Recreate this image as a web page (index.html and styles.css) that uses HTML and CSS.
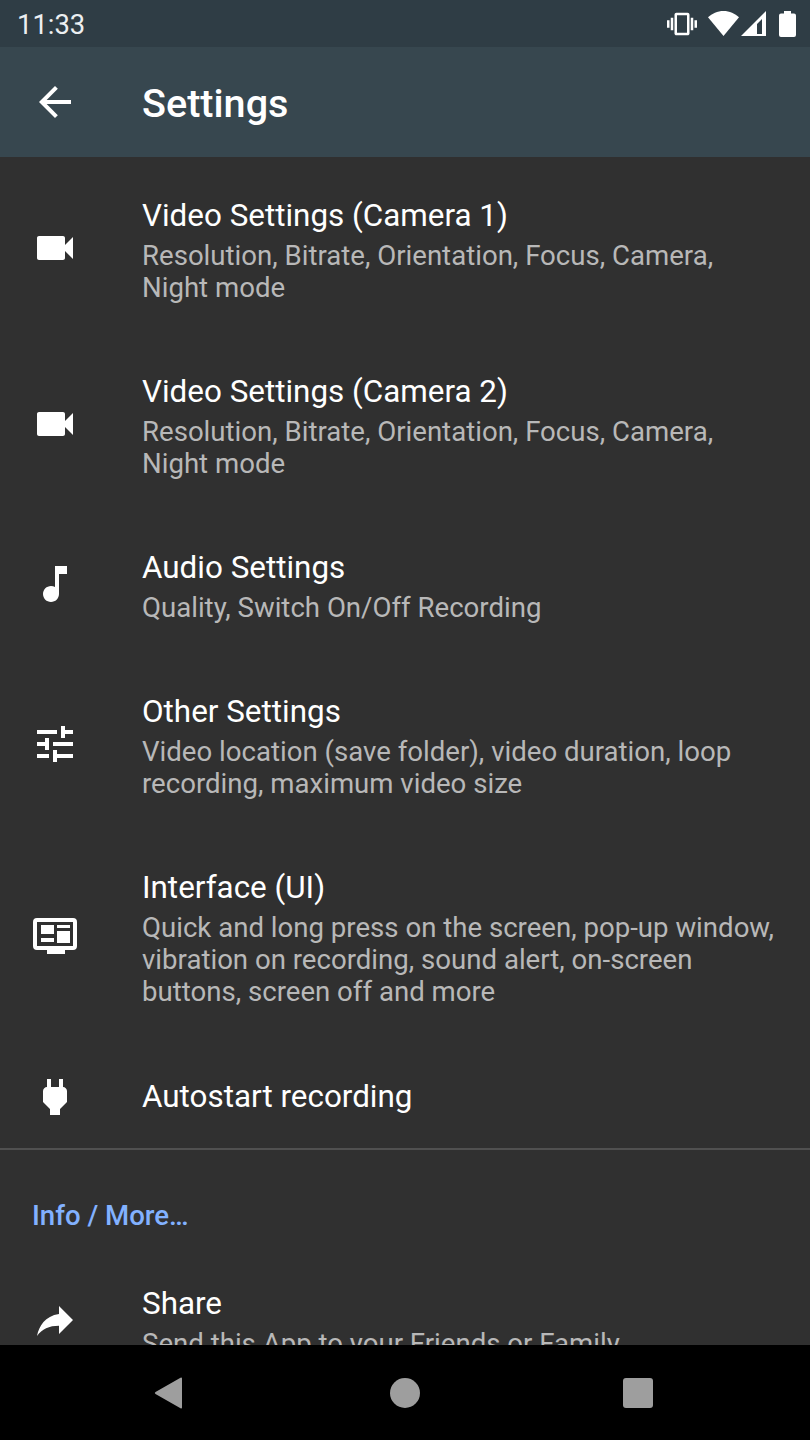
FILE: index.html
```html
<!DOCTYPE html>
<html lang="en">

<head>
    <meta charset="UTF-8">
    <meta name="viewport" content="width=device-width, initial-scale=1.0">
    <title>Settings</title>
    <link rel="stylesheet" href="styles.css">
</head>

<body>
    <div class="screen">
        <!-- status bar -->
        <div class="status-bar">
            <span class="status-time">11:33</span>
            <div class="status-icons">
                <svg class="ic-vibrate" viewBox="0 0 24 24"><path d="M0 15h2V9H0v6zm3 2h2V7H3v10zm19-8v6h2V9h-2zm-3 8h2V7h-2v10zM16.5 3h-9C6.67 3 6 3.67 6 4.5v15c0 .83.67 1.5 1.5 1.5h9c.83 0 1.5-.67 1.5-1.5v-15c0-.83-.67-1.5-1.5-1.5zM16 19H8V5h8v14z"/></svg>
                <svg class="ic-wifi" viewBox="0 0 31 25"><path d="M15.5 25L0 6.2C4 2.6 9.4 0 15.5 0S27 2.6 31 6.2z"/></svg>
                <svg class="ic-signal" viewBox="0 0 25 25"><path fill-rule="evenodd" d="M25 0v25H0zM21 8l-5 5v10h5z"/></svg>
                <svg class="ic-battery" viewBox="0 0 17 26"><path d="M5 0h7v2.500h3a2 2 0 0 1 2 2V24a2 2 0 0 1-2 2H2a2 2 0 0 1-2-2V4.500a2 2 0 0 1 2-2h3z"/></svg>
            </div>
        </div>

        <!-- toolbar -->
        <header class="toolbar">
            <svg class="icon" viewBox="0 0 24 24"><path d="M20 11H7.830l5.590-5.590L12 4l-8 8 8 8 1.410-1.410L7.830 13H20v-2z"/></svg>
            <h1>Settings</h1>
        </header>

        <main class="content">
            <div class="row">
                <svg class="icon" viewBox="0 0 24 24"><path d="M17 10.500V7c0-.55-.45-1-1-1H4c-.55 0-1 .45-1 1v10c0 .55.45 1 1 1h12c.55 0 1-.45 1-1v-3.500l4 4v-11l-4 4z"/></svg>
                <div class="row-text">
                    <div class="row-title">Video Settings (Camera 1)</div>
                    <div class="row-sub">Resolution, Bitrate, Orientation, Focus, Camera, Night mode</div>
                </div>
            </div>
            <div class="row">
                <svg class="icon" viewBox="0 0 24 24"><path d="M17 10.500V7c0-.55-.45-1-1-1H4c-.55 0-1 .45-1 1v10c0 .55.45 1 1 1h12c.55 0 1-.45 1-1v-3.500l4 4v-11l-4 4z"/></svg>
                <div class="row-text">
                    <div class="row-title">Video Settings (Camera 2)</div>
                    <div class="row-sub">Resolution, Bitrate, Orientation, Focus, Camera, Night mode</div>
                </div>
            </div>
            <div class="row">
                <svg class="icon" viewBox="0 0 24 24"><path d="M12 3v10.550c-.59-.34-1.270-.55-2-.55-2.210 0-4 1.790-4 4s1.790 4 4 4 4-1.790 4-4V7h4V3h-6z"/></svg>
                <div class="row-text">
                    <div class="row-title">Audio Settings</div>
                    <div class="row-sub">Quality, Switch On/Off Recording</div>
                </div>
            </div>
            <div class="row">
                <svg class="icon" viewBox="0 0 24 24"><path d="M3 17v2h6v-2H3zM3 5v2h10V5H3zm10 16v-2h8v-2h-8v-2h-2v6h2zM7 9v2H3v2h4v2h2V9H7zm14 4v-2H11v2h10zm-6-4h2V7h4V5h-4V3h-2v6z"/></svg>
                <div class="row-text">
                    <div class="row-title">Other Settings</div>
                    <div class="row-sub">Video location (save folder), video duration, loop recording, maximum video size</div>
                </div>
            </div>
            <div class="row">
                <svg class="icon icon-wide" viewBox="0 0 44 36">
                    <path fill-rule="evenodd" d="M4 0h36a4 4 0 0 1 4 4v24a4 4 0 0 1-4 4H32v4H14v-4H4a4 4 0 0 1-4-4V4a4 4 0 0 1 4-4zM4 4v24h36V4z"/>
                    <path d="M8 7h13v9H8zM24 7h13v3H24zM8 20h13v4H8zM24 13h13v12H24z"/>
                </svg>
                <div class="row-text">
                    <div class="row-title">Interface (UI)</div>
                    <div class="row-sub">Quick and long press on the screen, pop-up window, vibration on recording, sound alert, on-screen buttons, screen off and more</div>
                </div>
            </div>
            <div class="row row-single">
                <svg class="icon" viewBox="0 0 24 24"><path d="M16.010 7L16 3h-2v4h-4V3H8v4h-.01C7 6.990 6 7.990 6 8.990v5.490L9.500 18v3h5v-3l3.500-3.510v-5.500c0-1-1-2-1.990-1.990z"/></svg>
                <div class="row-text">
                    <div class="row-title">Autostart recording</div>
                </div>
            </div>

            <div class="divider"></div>
            <div class="section-label">Info / More…</div>

            <div class="row">
                <svg class="icon" viewBox="0 0 24 24"><path d="M14 9V5l7 7-7 7v-4.100c-5 0-8.500 1.600-11 5.100 1-5 4-10 11-11z"/></svg>
                <div class="row-text">
                    <div class="row-title">Share</div>
                    <div class="row-sub">Send this App to your Friends or Family</div>
                </div>
            </div>
        </main>

        <!-- navigation bar -->
        <nav class="nav-bar">
            <svg class="nav-btn" viewBox="0 0 40 40"><path d="M33 5.500v29a1 1 0 0 1-1.500.8L6.500 21a1.200 1.200 0 0 1 0-2L31.500 4.700a1 1 0 0 1 1.500.8z"/></svg>
            <svg class="nav-btn nav-home" viewBox="0 0 40 40"><circle cx="20" cy="20" r="15"/></svg>
            <svg class="nav-btn nav-recent" viewBox="0 0 40 40"><rect x="5" y="5" width="30" height="30" rx="3"/></svg>
        </nav>
    </div>
</body>

</html>
```

FILE: styles.css
```css
body {
    font-family: Roboto, "Liberation Sans", sans-serif;
    margin: 0;
    padding: 0;
    background-color: #303030;
    color: #fff;
}

svg {
    fill: currentColor;
    flex: none;
}

.screen {
    width: 810px;
    height: 1440px;
    display: flex;
    flex-direction: column;
    overflow: hidden;
}

.status-bar {
    height: 47px;
    flex: none;
    display: flex;
    align-items: center;
    justify-content: space-between;
    padding: 0 14px 0 17px;
    background-color: #2f3d45;
}

.status-time {
    font-size: 27.4px;
    padding-top: 2px;
    color: #eceff1;
}

.status-icons {
    display: flex;
    align-items: center;
}

.ic-vibrate {
    width: 30px;
    height: 30px;
    margin-right: 11px;
}

.ic-wifi {
    width: 31px;
    height: 25px;
    margin-right: 2px;
}

.ic-signal {
    width: 25px;
    height: 25px;
    margin-right: 13px;
}

.ic-battery {
    width: 17px;
    height: 26px;
}

.toolbar {
    height: 110px;
    flex: none;
    display: flex;
    align-items: center;
    padding-left: 31px;
    background-color: #37474f;
}

.toolbar h1 {
    margin: 0 0 0 63px;
    padding-top: 3px;
    font-size: 39.6px;
    font-weight: 500;
}

.icon {
    width: 48px;
    height: 48px;
}

.icon-wide {
    width: 44px;
    height: 36px;
    margin: 0 2px;
}

.content {
    flex: 1;
    min-height: 0;
    overflow: hidden;
    padding-top: 4px;
}

.row {
    display: flex;
    align-items: center;
    padding: 31px 30px 33px 31px;
}

.row-single {
    padding-top: 32px;
    padding-bottom: 27px;
}

.row-text {
    margin-left: 63px;
    min-width: 0;
}

.row-title {
    font-size: 31.4px;
    line-height: 48px;
}

.row-sub {
    font-size: 27.6px;
    line-height: 32px;
    color: #b8b8b8;
}

.divider {
    height: 2px;
    background-color: #505050;
}

.section-label {
    padding: 46px 32px 13px;
    font-size: 27.6px;
    line-height: 40px;
    font-weight: 500;
    color: #82b1ff;
}

.nav-bar {
    height: 95px;
    flex: none;
    display: flex;
    align-items: center;
    padding-left: 149px;
    background-color: #000;
    color: #9e9e9e;
}

.nav-btn {
    width: 40px;
    height: 40px;
}

.nav-home {
    margin-left: 196px;
}

.nav-recent {
    margin-left: 193px;
}
```
